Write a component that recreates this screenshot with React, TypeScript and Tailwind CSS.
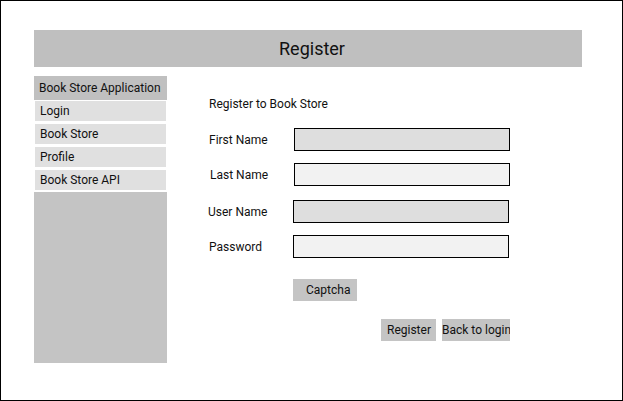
const font = { fontFamily: "Roboto, 'Liberation Sans', sans-serif" };

const NAV = ["Login", "Book Store", "Profile", "Book Store API"];

function Field({ label, shade, labelPad, inputPad, top }: { label: string; shade: string; labelPad: string; inputPad: string; top: string }) {
  return (
    <div className={`flex items-center h-[23px] ${top}`}>
      <span className={`w-[85px] text-[12px] text-[#111] ${labelPad}`}>{label}</span>
      <div className={`h-[23px] w-[216px] border border-black ${shade} ${inputPad}`} />
    </div>
  );
}

export default function App() {
  return (
    <div style={font} className="w-[623px] h-[401px] border border-black bg-white box-border text-[#111]">
      <div className="mt-[29px] ml-[33px] w-[548px] h-[37px] bg-[#bfbfbf] flex items-center justify-center pl-[8px] text-[18px]">
        Register
      </div>

      <div className="flex mt-[9px] ml-[33px]">
        <aside className="w-[133px] flex flex-col">
          <div className="h-[24px] bg-[#c0c0c0] flex items-center pl-[5px] text-[12px]">Book Store Application</div>
          <div className="flex flex-col gap-[3px] pt-[1px]">
            {NAV.map((n) => (
              <div key={n} className="h-[20px] ml-[1px] w-[131px] bg-[#e0e0e0] flex items-center pl-[5px] text-[12px]">
                {n}
              </div>
            ))}
          </div>
          <div className="mt-[2px] h-[171px] bg-[#c4c4c4]" />
        </aside>

        <main className="flex flex-col pl-[42px]">
          <p className="mt-[20px] h-[16px] leading-[16px] text-[12px]">Register to Book Store</p>
          <Field label="First Name" shade="bg-[#dedede]" labelPad="" inputPad="" top="mt-[16px]" />
          <Field label="Last Name" shade="bg-[#f2f2f2]" labelPad="pl-[1px]" inputPad="" top="mt-[12px]" />
          <Field label="User Name" shade="bg-[#dedede]" labelPad="-ml-[1px] pr-[1px]" inputPad="" top="mt-[14px]" />
          <Field label="Password" shade="bg-[#f2f2f2]" labelPad="pr-[1px]" inputPad="-ml-[1px]" top="mt-[12px]" />

          <button className="mt-[21px] ml-[84px] h-[22px] w-[64px] bg-[#c4c4c4] text-left pl-[13px] text-[12px]">
            Captcha
          </button>

          <div className="mt-[18px] ml-[172px] flex gap-[6px]">
            <button className="h-[22px] w-[55px] bg-[#c4c4c4] text-left pl-[6px] text-[12px]">Register</button>
            <button className="h-[22px] w-[68px] bg-[#c4c4c4] text-left pl-0 text-[12px] whitespace-nowrap overflow-hidden">
              Back to login
            </button>
          </div>
        </main>
      </div>
    </div>
  );
}
